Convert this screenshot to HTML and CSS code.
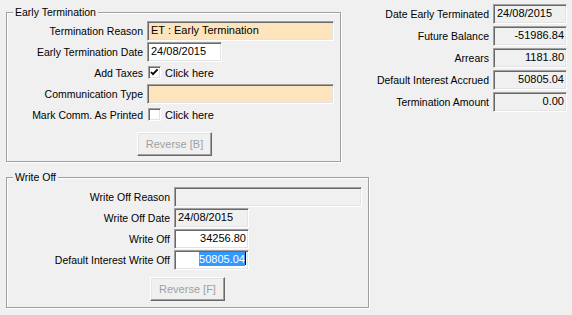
FILE: index.html
```html
<!DOCTYPE html>
<html>
<head>
<meta charset="utf-8">
<link rel="stylesheet" href="styles.css">
</head>
<body>
<div class="page">
  <div class="left">
    <div class="group group-et">
      <span class="group-title">Early Termination</span>
      <div class="form form-et">
        <label class="lbl">Termination Reason</label>
        <div class="field field-wide field-req">ET : Early Termination</div>
        <label class="lbl">Early Termination Date</label>
        <div class="field field-date">24/08/2015</div>
        <label class="lbl">Add Taxes</label>
        <div class="check-row">
          <span class="check"><svg width="11" height="11" viewBox="0 0 11 11"><polyline points="2,5 4,7.2 8.6,2.4" fill="none" stroke="#000" stroke-width="1.8"/></svg></span>
          <span>Click here</span>
        </div>
        <label class="lbl">Communication Type</label>
        <div class="field field-wide field-req"></div>
        <label class="lbl">Mark Comm. As Printed</label>
        <div class="check-row">
          <span class="check"></span>
          <span>Click here</span>
        </div>
      </div>
      <div class="btn-row btn-row-et"><button class="btn" disabled>Reverse [B]</button></div>
    </div>

    <div class="group group-wo">
      <span class="group-title">Write Off</span>
      <div class="form form-wo">
        <label class="lbl">Write Off Reason</label>
        <div class="field field-wide2 field-disabled"></div>
        <label class="lbl">Write Off Date</label>
        <div class="field field-date field-disabled">24/08/2015</div>
        <label class="lbl">Write Off</label>
        <div class="field field-date num">34256.80</div>
        <label class="lbl">Default Interest Write Off</label>
        <div class="field field-date num"><span class="sel">50805.04</span><span class="caret"></span></div>
      </div>
      <div class="btn-row btn-row-wo"><button class="btn" disabled>Reverse [F]</button></div>
    </div>
  </div>

  <div class="right">
    <label class="lbl">Date Early Terminated</label>
    <div class="field field-disabled field-r">24/08/2015</div>
    <label class="lbl">Future Balance</label>
    <div class="field field-disabled field-r num">-51986.84</div>
    <label class="lbl">Arrears</label>
    <div class="field field-disabled field-r num">1181.80</div>
    <label class="lbl">Default Interest Accrued</label>
    <div class="field field-disabled field-r num">50805.04</div>
    <label class="lbl">Termination Amount</label>
    <div class="field field-disabled field-r num">0.00</div>
  </div>
</div>
</body>
</html>
```

FILE: styles.css
```css
html, body {
  margin: 0;
  padding: 0;
  background: #f0f0f0;
}
body {
  font-family: "Liberation Sans", Arial, sans-serif;
  font-size: 10.5px;
  color: #000;
  width: 572px;
  height: 315px;
  overflow: hidden;
}
.page {
  display: flex;
  align-items: flex-start;
}
.left {
  width: 364px;
  padding-left: 6px;
  flex: none;
}
.group {
  position: relative;
  box-sizing: border-box;
  border: 1px solid #a0a0a0;
  box-shadow: inset 1px 1px 0 #fff, 1px 1px 0 #fff;
}
.group-title {
  position: absolute;
  top: -8px;
  left: 6px;
  padding: 0 2px;
  line-height: 14px;
  background: #f0f0f0;
}
.group-et {
  margin-top: 12px;
  width: 335px;
  height: 150px;
}
.group-wo {
  margin-top: 15px;
  width: 363px;
  height: 131px;
}
.form {
  display: grid;
  column-gap: 4px;
  align-items: center;
}
.form-et {
  grid-template-columns: 136px auto;
  grid-auto-rows: 21px;
  padding-top: 7px;
}
.form-wo {
  grid-template-columns: 163px auto;
  grid-auto-rows: 21px;
  padding-top: 8px;
}
.lbl {
  text-align: right;
  white-space: nowrap;
}
.field {
  box-sizing: border-box;
  height: 20px;
  line-height: 16px;
  background: #fff;
  border: 1px solid;
  border-color: #a0a0a0 #fff #fff #a0a0a0;
  box-shadow: inset 1px 1px 0 #696969, inset -1px -1px 0 #e3e3e3;
  padding: 0 1px 0 3px;
  white-space: nowrap;
  overflow: hidden;
  font-size: 11px;
}
.field-wide { width: 187px; }
.field-wide2 { width: 188px; }
.field-date { width: 75px; }
.field-req { background: #fee4bc; }
.field-disabled { background: #f0f0f0; }
.num {
  text-align: right;
  padding-right: 2px;
}
.sel {
  background: #3399ff;
  color: #fff;
  padding: 1px 0;
}
.caret {
  display: inline-block;
  width: 1px;
  height: 13px;
  background: #000;
  vertical-align: -2px;
}
.check-row {
  display: flex;
  align-items: center;
  gap: 4px;
  padding-left: 1px;
  font-size: 11px;
}
.check {
  box-sizing: border-box;
  width: 13px;
  height: 13px;
  background: #fff;
  border: 1px solid;
  border-color: #a0a0a0 #fff #fff #a0a0a0;
  box-shadow: inset 1px 1px 0 #696969, inset -1px -1px 0 #e3e3e3;
  display: flex;
  align-items: center;
  justify-content: center;
}
.check svg { display: block; }
.btn-row { display: flex; }
.btn-row-et { padding-top: 7px; padding-left: 130px; }
.btn-row-wo { padding-top: 7px; padding-left: 143px; }
.btn {
  box-sizing: border-box;
  width: 75px;
  height: 24px;
  padding: 0;
  margin: 0;
  font-family: "Liberation Sans", Arial, sans-serif;
  font-size: 11px;
  color: #a0a0a0;
  background: #f0f0f0;
  border: 1px solid;
  border-color: #fff #696969 #696969 #fff;
  box-shadow: inset -1px -1px 0 #a0a0a0, inset 1px 1px 0 #e3e3e3;
}
.right {
  display: grid;
  grid-template-columns: 119px 74px;
  grid-auto-rows: 20px;
  row-gap: 2px;
  column-gap: 4px;
  align-items: center;
  padding-top: 4px;
}
.field-r { width: 74px; }
```
